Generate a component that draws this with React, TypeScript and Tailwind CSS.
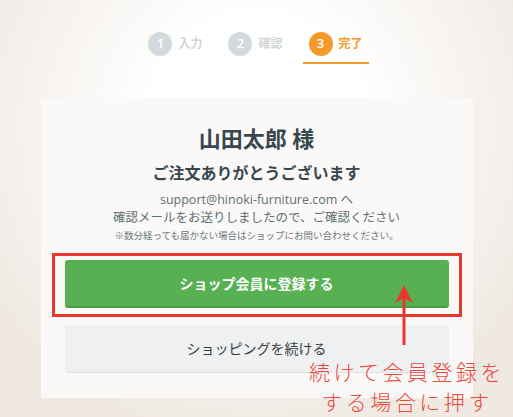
const steps = [
  { n: "1", label: "入力", active: false },
  { n: "2", label: "確認", active: false },
  { n: "3", label: "完了", active: true },
];

const App = () => {
  return (
    <div
      className="relative w-[513px] h-[417px] overflow-hidden bg-[radial-gradient(ellipse_60%_75%_at_50%_30%,#ffffff_35%,#efe9e2_100%)]"
      style={{ fontFamily: '"Open Sans", "Noto Sans CJK JP", sans-serif' }}
    >
      {/* Steps */}
      <div className="flex justify-center items-start gap-[26px] pt-[32px] pr-[2px]">
        {steps.map((s) => (
          <div
            key={s.n}
            className={`flex items-center gap-[6px] pb-[6px] ${
              s.active ? "border-b-2 border-[#f39a2b] px-[6px] -mx-[6px]" : ""
            }`}
          >
            <span
              className={`w-[24px] h-[24px] rounded-full flex items-center justify-center text-[13px] font-semibold text-white ${
                s.active ? "bg-[#f39a2b]" : "bg-[#d3d9dd]"
              }`}
            >
              {s.n}
            </span>
            <span
              className={`text-[12px] font-bold ${
                s.active ? "text-[#f39a2b]" : "text-[#d0d5d8]"
              }`}
            >
              {s.label}
            </span>
          </div>
        ))}
      </div>

      {/* Card */}
      <div className="mx-auto mt-[34px] w-[432px] h-[300px] bg-[#faf9f7] px-[24px] pt-[25px] text-center">
        <h1 className="text-[22px] leading-[30px] font-bold text-[#37474f]">山田太郎 様</h1>
        <p className="mt-[8px] text-[16px] leading-[24px] font-bold text-[#37474f]">
          ご注文ありがとうございます
        </p>
        <p className="mt-[6px] text-[12.5px] leading-[18px] text-[#5f6e75]">
          support@hinoki-furniture.com へ
          <br />
          確認メールをお送りしましたので、ご確認ください
        </p>
        <p className="text-[9.5px] leading-[18px] text-[#6b777c]">
          ※数分経っても届かない場合はショップにお問い合わせください。
        </p>
        <button className="mt-[15px] w-full h-[48px] rounded-[3px] bg-[#57b152] border-b-2 border-[#4a9c45] text-white text-[14px] font-bold">
          ショップ会員に登録する
        </button>
        <button className="mt-[17px] w-full h-[48px] rounded-[3px] bg-[#eef0f2] border-b border-[#dfe3e6] text-[#3a3f42] text-[14px]">
          ショッピングを続ける
        </button>
      </div>

      {/* Annotation */}
      <div className="absolute left-[52px] top-[253px] w-[410px] h-[64px] border-[3px] border-[#e8392f]" />
      <svg className="absolute left-[394px] top-[284px]" width="20" height="62" viewBox="0 0 20 62">
        <rect x="8.5" y="10" width="3" height="51" fill="#e8392f" />
        <path d="M10 1 L19 19 L10 14 L1 19 Z" fill="#e8392f" />
      </svg>
      <div className="absolute left-[309px] top-[357px] text-[21px] leading-[30px] tracking-[3.5px] text-[#e8493c] font-light text-center">
        続けて会員登録を
        <br />
        する場合に押す
      </div>
    </div>
  );
};

export default App;
